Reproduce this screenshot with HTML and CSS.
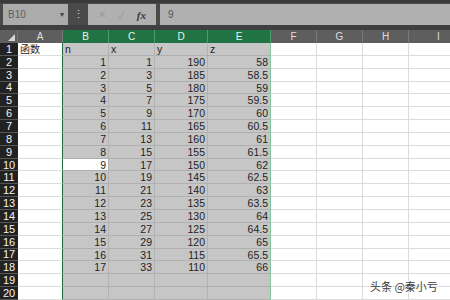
FILE: index.html
```html
<!DOCTYPE html>
<html lang="zh">
<head>
    <meta charset="UTF-8">
    <title>函数</title>
    <link rel="stylesheet" href="styles.css">
</head>
<body>
    <div class="formula-bar">
        <div class="name-box">
            <span>B10</span>
            <span class="caret">▾</span>
        </div>
        <div class="grip">⋮</div>
        <div class="buttons">
            <span class="btn">✕</span>
            <span class="btn">✓</span>
            <span class="btn fx">fx</span>
        </div>
        <div class="formula-input">9</div>
    </div>

    <div class="sheet" id="sheet"></div>

    <div class="watermark">头条 @秦小亏</div>

    <script>
        const sheet = document.getElementById('sheet');
        const cols = ['A', 'B', 'C', 'D', 'E', 'F', 'G', 'H', 'I'];
        const selected = ['B', 'C', 'D', 'E'];

        function cell(cls, text) {
            const div = document.createElement('div');
            div.className = cls;
            div.textContent = text || '';
            sheet.appendChild(div);
        }

        // column headers
        cell('corner');
        cols.forEach(c => {
            cell('col-head' + (selected.includes(c) ? ' sel' : ''), c);
        });

        // rows
        for (let r = 1; r <= 20; r++) {
            cell('row-head', r);
            cols.forEach(c => {
                let text = '';
                let cls = 'cell col-' + c.toLowerCase();
                if (selected.includes(c)) cls += ' sel';
                const i = r - 1;
                if (r === 1) {
                    text = { A: '函数', B: 'n', C: 'x', D: 'y', E: 'z' }[c] || '';
                } else if (r <= 18) {
                    if (c === 'B') text = i;
                    if (c === 'C') text = 2 * i - 1;
                    if (c === 'D') text = 195 - 5 * i;
                    if (c === 'E') text = 57.5 + 0.5 * i;
                    if (text !== '') cls += ' num';
                }
                if (r === 10 && c === 'B') cls += ' active';
                cell(cls, text);
            });
        }
    </script>
</body>
</html>
```

FILE: styles.css
```css
* {
    margin: 0;
    padding: 0;
    box-sizing: border-box;
}

body {
    font-family: "Liberation Sans Narrow", "Liberation Sans", "Noto Sans CJK SC", sans-serif;
    background: #fff;
    width: 450px;
    height: 300px;
    overflow: hidden;
    position: relative;
}

.formula-bar {
    height: 30px;
    background: #4a4a4a;
    border-top: 3px solid #3b3b3b;
    border-bottom: 5px solid #3f3f3f;
    display: flex;
    align-items: stretch;
    padding: 1px 0 0 3px;
}

.name-box {
    width: 65px;
    background: #ababab;
    color: #5e5e5e;
    font-size: 10px;
    display: flex;
    align-items: center;
    justify-content: space-between;
    padding: 0 4px 0 5px;
}

.caret {
    font-size: 8px;
    color: #444;
}

.grip {
    width: 20px;
    color: #ddd;
    font-size: 11px;
    display: flex;
    align-items: center;
    justify-content: center;
}

.buttons {
    width: 68px;
    background: #b0b0b0;
    display: flex;
    align-items: center;
    justify-content: space-around;
    padding: 0 4px;
}

.btn {
    color: #9a9a9a;
    font-size: 10px;
}

.btn.fx {
    color: #3a3a3a;
    font-family: "Liberation Serif", serif;
    font-style: italic;
    font-weight: bold;
    font-size: 11px;
}

.formula-input {
    flex: 1;
    margin-left: 4px;
    background: #b0b0b0;
    color: #555;
    font-size: 10px;
    display: flex;
    align-items: center;
    padding-left: 8px;
}

.sheet {
    display: grid;
    grid-template-columns: 18px 45px 46px 46px 53px 63px 46px 46px 46px 60px;
    grid-template-rows: 13px repeat(20, 12.85px);
}

.corner {
    background: #5e5e5e;
    border-right: 1px solid #777;
    position: relative;
}

.corner::after {
    content: "";
    position: absolute;
    right: 2px;
    bottom: 2px;
    border-style: solid;
    border-width: 0 0 7px 7px;
    border-color: transparent transparent #d8d8d8 transparent;
}

.col-head {
    background: #5e5e5e;
    color: #dedede;
    font-size: 10px;
    display: flex;
    align-items: center;
    justify-content: center;
    border-right: 1px solid #7a7a7a;
}

.col-head.sel {
    background: #217346;
    color: #e8f5ec;
    border-right-color: #4f9a6e;
}

.row-head {
    background: #222;
    color: #f2f2f2;
    font-size: 11px;
    display: flex;
    align-items: center;
    justify-content: center;
    border-bottom: 1px solid #555;
}

.cell {
    font-size: 10.5px;
    color: #1e1e1e;
    border-right: 1px solid #dcdcdc;
    border-bottom: 1px solid #dcdcdc;
    padding: 0 2px;
    white-space: nowrap;
    line-height: 12px;
}

.cell.col-a {
    border-right: 1px solid #1b6b3d;
    font-family: "Noto Sans CJK SC", sans-serif;
    font-size: 10px;
    line-height: 11px;
}

.cell.sel {
    background: #c6c6c6;
    border-right-color: #b3b3b3;
    border-bottom-color: #b0b0b0;
}

.cell.col-e {
    border-right: 1px solid #7fc79a;
}

.cell.num {
    text-align: right;
}

.cell.active {
    background: #fff;
}

.watermark {
    position: absolute;
    left: 370px;
    top: 278px;
    font-family: "Noto Sans CJK SC", sans-serif;
    font-size: 11px;
    color: #3c3c3c;
    text-shadow: 0 0 2px #fff, 0 0 2px #fff;
}
```
